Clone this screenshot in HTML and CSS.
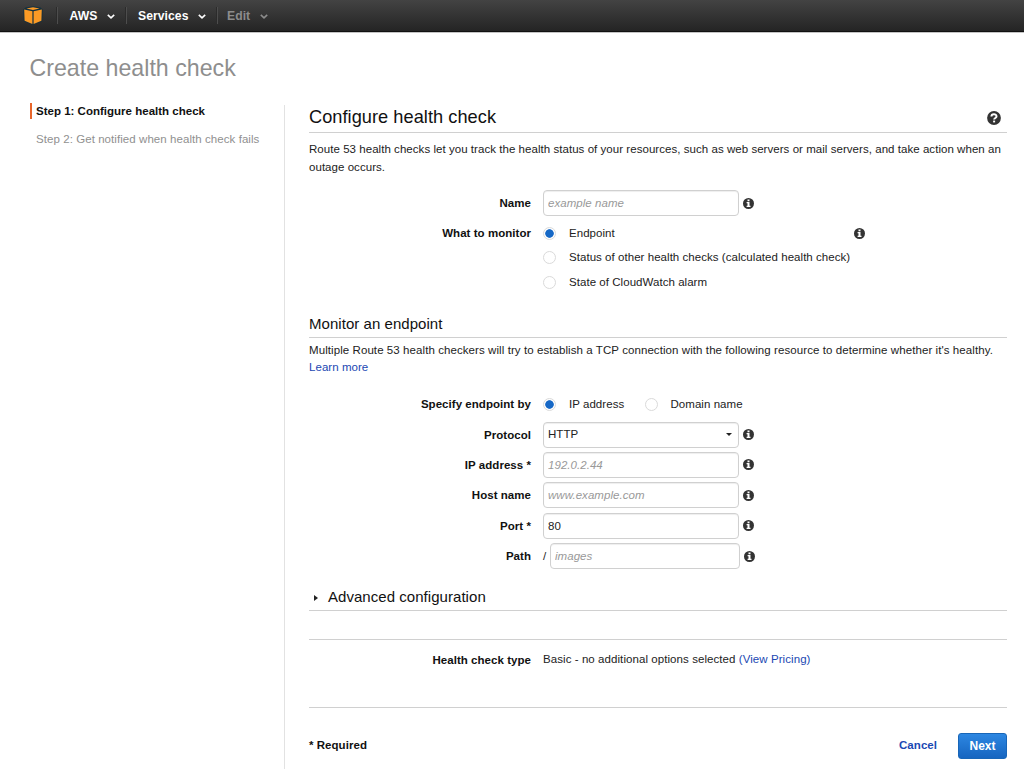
FILE: index.html
```html
<!DOCTYPE html>
<html lang="en">
<head>
<meta charset="utf-8">
<title>Create health check</title>
<link rel="stylesheet" href="styles.css">
</head>
<body>
<svg class="symbols" aria-hidden="true">
  <symbol id="info" viewBox="0 0 11 11">
    <circle cx="5.5" cy="5.5" r="5.5" fill="#333"/>
    <path d="M4.5 1.5h2v1.8h-2zM3.6 4.1h2.9v3.7h1v1.3H3.6V7.8h.9V5.3h-.9z" fill="#fff"/>
  </symbol>
  <symbol id="chevron" viewBox="0 0 8 5">
    <path d="M.8.8 4 3.8 7.2.8" fill="none" stroke="currentColor" stroke-width="1.6"/>
  </symbol>
</svg>
<header class="topbar">
  <svg class="cube" viewBox="0 0 20 19">
    <path d="M10 .2 17.5 1.6 19.7 3.6 19.2 15.2 10 18.8.8 15.2.3 3.6 2.5 1.6z" fill="#14303f"/>
    <path d="M10 1.2 16.6 2.5 10 4 3.4 2.5zM1.2 3.6 9.4 5.3v12.6L1.6 14.8zM18.8 3.6 10.6 5.3v12.6l7.8-3.1z" fill="#fb9a25"/>
  </svg>
  <nav class="menu">
    <a class="menu-item aws"><span>AWS</span><svg class="chev"><use href="#chevron"/></svg></a>
    <a class="menu-item services"><span>Services</span><svg class="chev"><use href="#chevron"/></svg></a>
    <a class="menu-item edit"><span>Edit</span><svg class="chev"><use href="#chevron"/></svg></a>
  </nav>
</header>
<h1 class="page-title"><span>Create health check</span></h1>
<div class="columns">
  <aside class="steps">
    <div class="step active"><span>Step 1: Configure health check</span></div>
    <div class="step"><span>Step 2: Get notified when health check fails</span></div>
  </aside>
  <main class="content">
    <div class="section-head">
      <h2>Configure health check</h2>
      <svg class="help" viewBox="0 0 14 14"><circle cx="7" cy="7" r="6.9" fill="#333"/><path d="M4.4 5.6C4.4 2.5 9.5 2.5 9.5 5.4 9.5 7.1 7.1 6.9 7.1 8.6" fill="none" stroke="#fff" stroke-width="2"/><path d="M6.1 9.6h2v1.8h-2z" fill="#fff"/></svg>
    </div>
    <p class="intro">Route 53 health checks let you track the health status of your resources, such as web servers or mail servers, and take action when an<br>outage occurs.</p>

    <div class="row"><label>Name</label><div class="control"><input class="field" type="text" placeholder="example name"><svg class="info"><use href="#info"/></svg></div></div>
    <div class="row monitor"><label>What to monitor</label>
      <div class="options">
        <div class="option"><span class="radio on"></span><span>Endpoint</span><svg class="info far"><use href="#info"/></svg></div>
        <div class="option"><span class="radio"></span><span>Status of other health checks (calculated health check)</span></div>
        <div class="option"><span class="radio"></span><span>State of CloudWatch alarm</span></div>
      </div>
    </div>

    <h3 class="subhead">Monitor an endpoint</h3>
    <p class="endpoint-copy"><span class="multi">Multiple Route 53 health checkers will try to establish a TCP connection with the following resource to determine whether it's healthy.</span><br><a>Learn more</a></p>

    <div class="row"><label>Specify endpoint by</label><div class="control"><div class="option ip"><span class="radio on"></span><span>IP address</span></div><div class="option"><span class="radio"></span><span>Domain name</span></div></div></div>
    <div class="row"><label>Protocol</label><div class="control"><div class="field select"><span>HTTP</span><i class="caret"></i></div><svg class="info"><use href="#info"/></svg></div></div>
    <div class="row"><label>IP address *</label><div class="control"><input class="field" type="text" placeholder="192.0.2.44"><svg class="info"><use href="#info"/></svg></div></div>
    <div class="row"><label>Host name</label><div class="control"><input class="field" type="text" placeholder="www.example.com"><svg class="info"><use href="#info"/></svg></div></div>
    <div class="row"><label>Port *</label><div class="control"><input class="field" type="text" value="80"><svg class="info"><use href="#info"/></svg></div></div>
    <div class="row"><label>Path</label><div class="control"><span class="slash">/</span><input class="field short" type="text" placeholder="images"><svg class="info"><use href="#info"/></svg></div></div>

    <div class="advanced"><i class="expand"></i><span>Advanced configuration</span></div>
    <div class="summary"><label>Health check type</label><span class="type">Basic - no additional options selected <a>(View Pricing)</a></span></div>
    <footer class="actions"><strong class="required">* Required</strong><a class="cancel">Cancel</a><button class="next" type="button">Next</button></footer>
  </main>
</div>
</body>
</html>
```
FILE: styles.css
```css
* { box-sizing: border-box; }
body {
  margin: 0;
  height: 769px;
  overflow: hidden;
  display: flex;
  flex-direction: column;
  background: #fff;
  color: #222;
  font: 11.5px/17px "Liberation Sans", Arial, sans-serif;
  letter-spacing: .045px;
}
.symbols { display: none; }
a { color: #1b48b3; text-decoration: none; }
h1, h2, h3, p { margin: 0; font-weight: normal; }

.topbar {
  flex: none;
  height: 32px;
  display: flex;
  align-items: center;
  padding-left: 23px;
  background: linear-gradient(#434343, #242424);
  border-bottom: 1px solid #111;
  box-shadow: 0 1px 0 #c4c4c4;
}
.cube { width: 20px; height: 19px; }
.menu { display: flex; margin-left: 14px; }
.menu-item {
  display: flex;
  align-items: center;
  height: 17px;
  padding: 1px 0 0 11.5px;
  border-left: 1px solid #4d4d4d;
  box-shadow: -1px 0 0 #2b2b2b;
  color: #fff;
  font-size: 12.2px;
  font-weight: bold;
}
.menu-item.aws { width: 69px; }
.menu-item.services { width: 91px; padding-left: 11px; }
.menu-item.edit { padding-left: 9px; color: #8c8c8c; }
.chev { width: 8px; height: 5px; margin-left: 9.5px; }

.page-title {
  flex: none;
  height: 73px;
  padding: 22px 0 0 29.5px;
  color: #8e8e8e;
  font-size: 23.2px;
  line-height: 28px;
  letter-spacing: 0;
}
.columns { flex: 1; display: flex; }
.steps { width: 284px; padding: 0 0 0 30px; }
.step { padding-left: 6px; height: 16px; line-height: 16px; color: #909090; letter-spacing: .065px; }
.step.active { border-left: 2px solid #e8652a; padding-left: 4px; color: #111; font-weight: bold; margin: -2px 0 12px; letter-spacing: .01px; }

.content { width: 740px; padding: 0 17px 0 24px; border-left: 1px solid #e2e2e2; }
.section-head { height: 28px; display: flex; align-items: flex-start; justify-content: space-between; border-bottom: 1px solid #d0d0d0; color: #111; }
.section-head h2 { font-size: 18.2px; line-height: 24px; }
.help { width: 14px; height: 14px; margin: 6px 6px 0 0; }
.intro { height: 55px; padding-top: 8px; white-space: nowrap; line-height: 17.5px; }

.row { display: grid; grid-template-columns: 222px 1fr; column-gap: 12px; height: 30.4px; align-items: center; }
.row label, .summary label { text-align: right; font-weight: bold; color: #111; }
.row label { padding-top: 1px; }
.control { display: flex; align-items: center; }
.field {
  width: 196px;
  height: 26px;
  border: 1px solid #d0d0d0;
  border-radius: 4px;
  padding: 0 5px 0 4px;
  background: #fff;
  box-shadow: inset 0 1px 1px #eee;
  font: inherit;
  letter-spacing: inherit;
  color: #222;
}
.field::placeholder { color: #999; font-style: italic; opacity: 1; }
.field.short { width: 190px; }
.slash { width: 7px; }
.info { width: 11px; height: 11px; margin-left: 3.5px; }
.select { display: flex; align-items: center; justify-content: space-between; padding-right: 6px; }
.caret { border: 3px solid transparent; border-top-color: #222; border-bottom: 0; }
.monitor { height: 95.6px; align-items: start; }
.monitor label { padding-top: 7px; }
.options { padding-top: 2.5px; }
.option { display: flex; align-items: center; height: 24.7px; }
.option.ip { width: 101.5px; }
.radio { width: 13px; height: 13px; flex: none; border: 1px solid #dadada; border-radius: 50%; margin-right: 13px; }
.radio.on { background: radial-gradient(circle, #1668c6 0 3.9px, #fff 4.6px); }
.info.far { margin-left: 239px; }

.subhead { height: 24px; border-bottom: 1px solid #d0d0d0; font-size: 15px; line-height: 20px; color: #111; }
.endpoint-copy { height: 51px; padding-top: 4px; white-space: nowrap; }
.multi { letter-spacing: .078px; }
.advanced { height: 39.6px; display: flex; align-items: flex-end; border-bottom: 1px solid #d0d0d0; font-size: 15px; line-height: 26px; color: #111; }
.expand { border: 3.5px solid transparent; border-left: 4px solid #222; border-right: 0; margin: 0 10px 9px 5px; }
.summary { display: grid; grid-template-columns: 222px 1fr; column-gap: 12px; height: 69px; margin-top: 28px; padding-top: 11px; border-top: 1px solid #d0d0d0; border-bottom: 1px solid #d0d0d0; }
.summary label { padding-top: 1px; }
.type { letter-spacing: .07px; }
.actions { display: flex; align-items: center; padding-top: 25px; }
.required { flex: 1; color: #111; }
.cancel { font-weight: bold; margin-right: 21px; }
.next { width: 49px; height: 26px; padding: 0; border: 1px solid #1866b8; border-radius: 3px; background: linear-gradient(#2d87e2, #1665c0); color: #fff; font: bold 12px "Liberation Sans", Arial, sans-serif; }
```
